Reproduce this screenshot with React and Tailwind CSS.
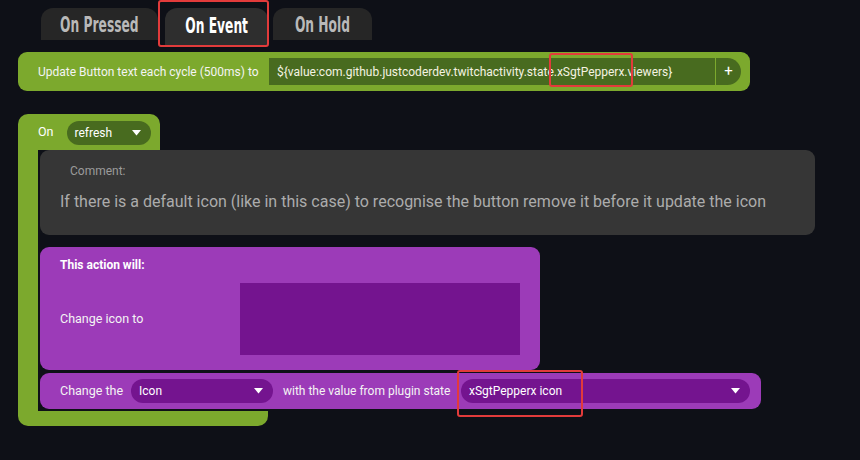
import React from 'react'

function Caret() {
  return (
    <svg width="9" height="6" viewBox="0 0 9 6" className="shrink-0">
      <path d="M0 0 H9 L4.5 5.5 Z" fill="#ffffff" />
    </svg>
  )
}

function Tab({ label, active, w }) {
  return (
    <div
      className={`flex items-center justify-center rounded-t-[12px] ${w} ${
        active ? 'h-[37px] pb-[2px] bg-[#2e2e2e] text-white' : 'h-[32px] pt-[2px] bg-[#262626] text-[#b9b9b9]'
      }`}
    >
      <span className="font-['DejaVu_Sans_Condensed',sans-serif] font-bold text-[22px] leading-none inline-block scale-x-[0.62] whitespace-nowrap">
        {label}
      </span>
    </div>
  )
}

function Pill({ text, w, bg }) {
  return (
    <div className={`h-[24px] ${w} ${bg} rounded-full flex items-center pl-[8px] pr-[10px]`}>
      <span className="flex-1 text-[12px] text-white leading-none whitespace-nowrap">{text}</span>
      <Caret />
    </div>
  )
}

export default function App() {
  return (
    <div className="relative w-[860px] h-[460px] bg-[#0e1017] overflow-hidden font-['Roboto',sans-serif]">
      {/* tabs */}
      <div className="flex items-start pl-[41px] pt-[8px]">
        <Tab label="On Pressed" w="w-[117px]" />
        <div className="w-[7px]" />
        <Tab label="On Event" w="w-[103px]" active />
        <div className="w-[5px]" />
        <Tab label="On Hold" w="w-[99px]" />
      </div>
      <div className="absolute left-[158px] top-0 w-[111px] h-[47px] border-2 border-[#e23b3b] rounded-[3px]" />

      {/* update text bar */}
      <div className="ml-[18px] mt-[7px] w-[732px] h-[39px] bg-[#7ca92d] rounded-[9px] flex items-center pl-[20px] pr-[9px]">
        <span className="text-[12px] text-[#f4f4f4] w-[231px] shrink-0 whitespace-nowrap">Update Button text each cycle (500ms) to</span>
        <div className="flex h-[27px] flex-1">
          <div className="flex-1 bg-[#486b1f] flex items-center pl-[8px] text-[12px] text-[#f5f3e2] whitespace-nowrap overflow-hidden">
            {'${value:com.github.justcoderdev.twitchactivity.state.xSgtPepperx.viewers}'}
          </div>
          <div className="w-[26px] bg-[#486b1f] border-l border-[#7ca92d] rounded-r-full flex items-center justify-center text-white text-[15px]">
            +
          </div>
        </div>
      </div>
      <div className="absolute left-[549px] top-[53px] w-[84px] h-[34px] border-2 border-[#e23b3b] rounded-[3px]" />

      {/* on event block */}
      <div className="ml-[18px] mt-[23px] flex flex-col">
        <div className="w-[142px] h-[36px] bg-[#7ca92d] rounded-t-[10px] flex items-center pl-[20px] pt-[1px] gap-[13px]">
          <span className="text-[12.5px] text-white">On</span>
          <Pill text="refresh" w="w-[84px]" bg="bg-[#486b1f]" />
        </div>
        <div className="flex">
          <div className="w-[20px] bg-[#7ca92d] shrink-0" />
          <div className="pl-[2px] pb-[2px] flex flex-col">
            {/* comment */}
            <div className="w-[775px] h-[85px] bg-[#363636] rounded-[9px] pt-[12px]">
              <div className="pl-[30px] text-[12px] text-[#9b9b9b]">Comment:</div>
              <div className="pl-[20px] mt-[10px] text-[16px] text-[#acacac] whitespace-nowrap">
                If there is a default icon (like in this case) to recognise the button remove it before it update the icon
              </div>
            </div>

            {/* action */}
            <div className="mt-[12px] w-[500px] h-[123px] bg-[#9c3bb8] rounded-[9px] pl-[20px] pr-[20px] pt-[9px]">
              <div className="text-[12px] font-bold text-white">This action will:</div>
              <div className="mt-[9px] flex items-center">
                <span className="w-[180px] text-[12.5px] text-[#f4f4f4]">Change icon to</span>
                <div className="w-[280px] h-[72px] bg-[#74148f]" />
              </div>
            </div>

            <div className="mt-[3px] w-[721px] h-[36px] bg-[#9c3bb8] rounded-[9px] flex items-center pl-[20px] pr-[11px]">
              <span className="text-[12.5px] text-[#f4f4f4] w-[71px] whitespace-nowrap">Change the</span>
              <Pill text="Icon" w="w-[142px]" bg="bg-[#74148f]" />
              <span className="ml-[10px] w-[178px] text-[12px] text-[#f4f4f4] whitespace-nowrap">with the value from plugin state</span>
              <Pill text="xSgtPepperx icon" w="flex-1" bg="bg-[#74148f]" />
            </div>
          </div>
        </div>
        <div className="w-[250px] h-[15px] bg-[#7ca92d] rounded-b-[10px]" />
      </div>
      <div className="absolute left-[457px] top-[370px] w-[126px] h-[47px] border-2 border-[#e23b3b] rounded-[3px]" />
    </div>
  )
}
